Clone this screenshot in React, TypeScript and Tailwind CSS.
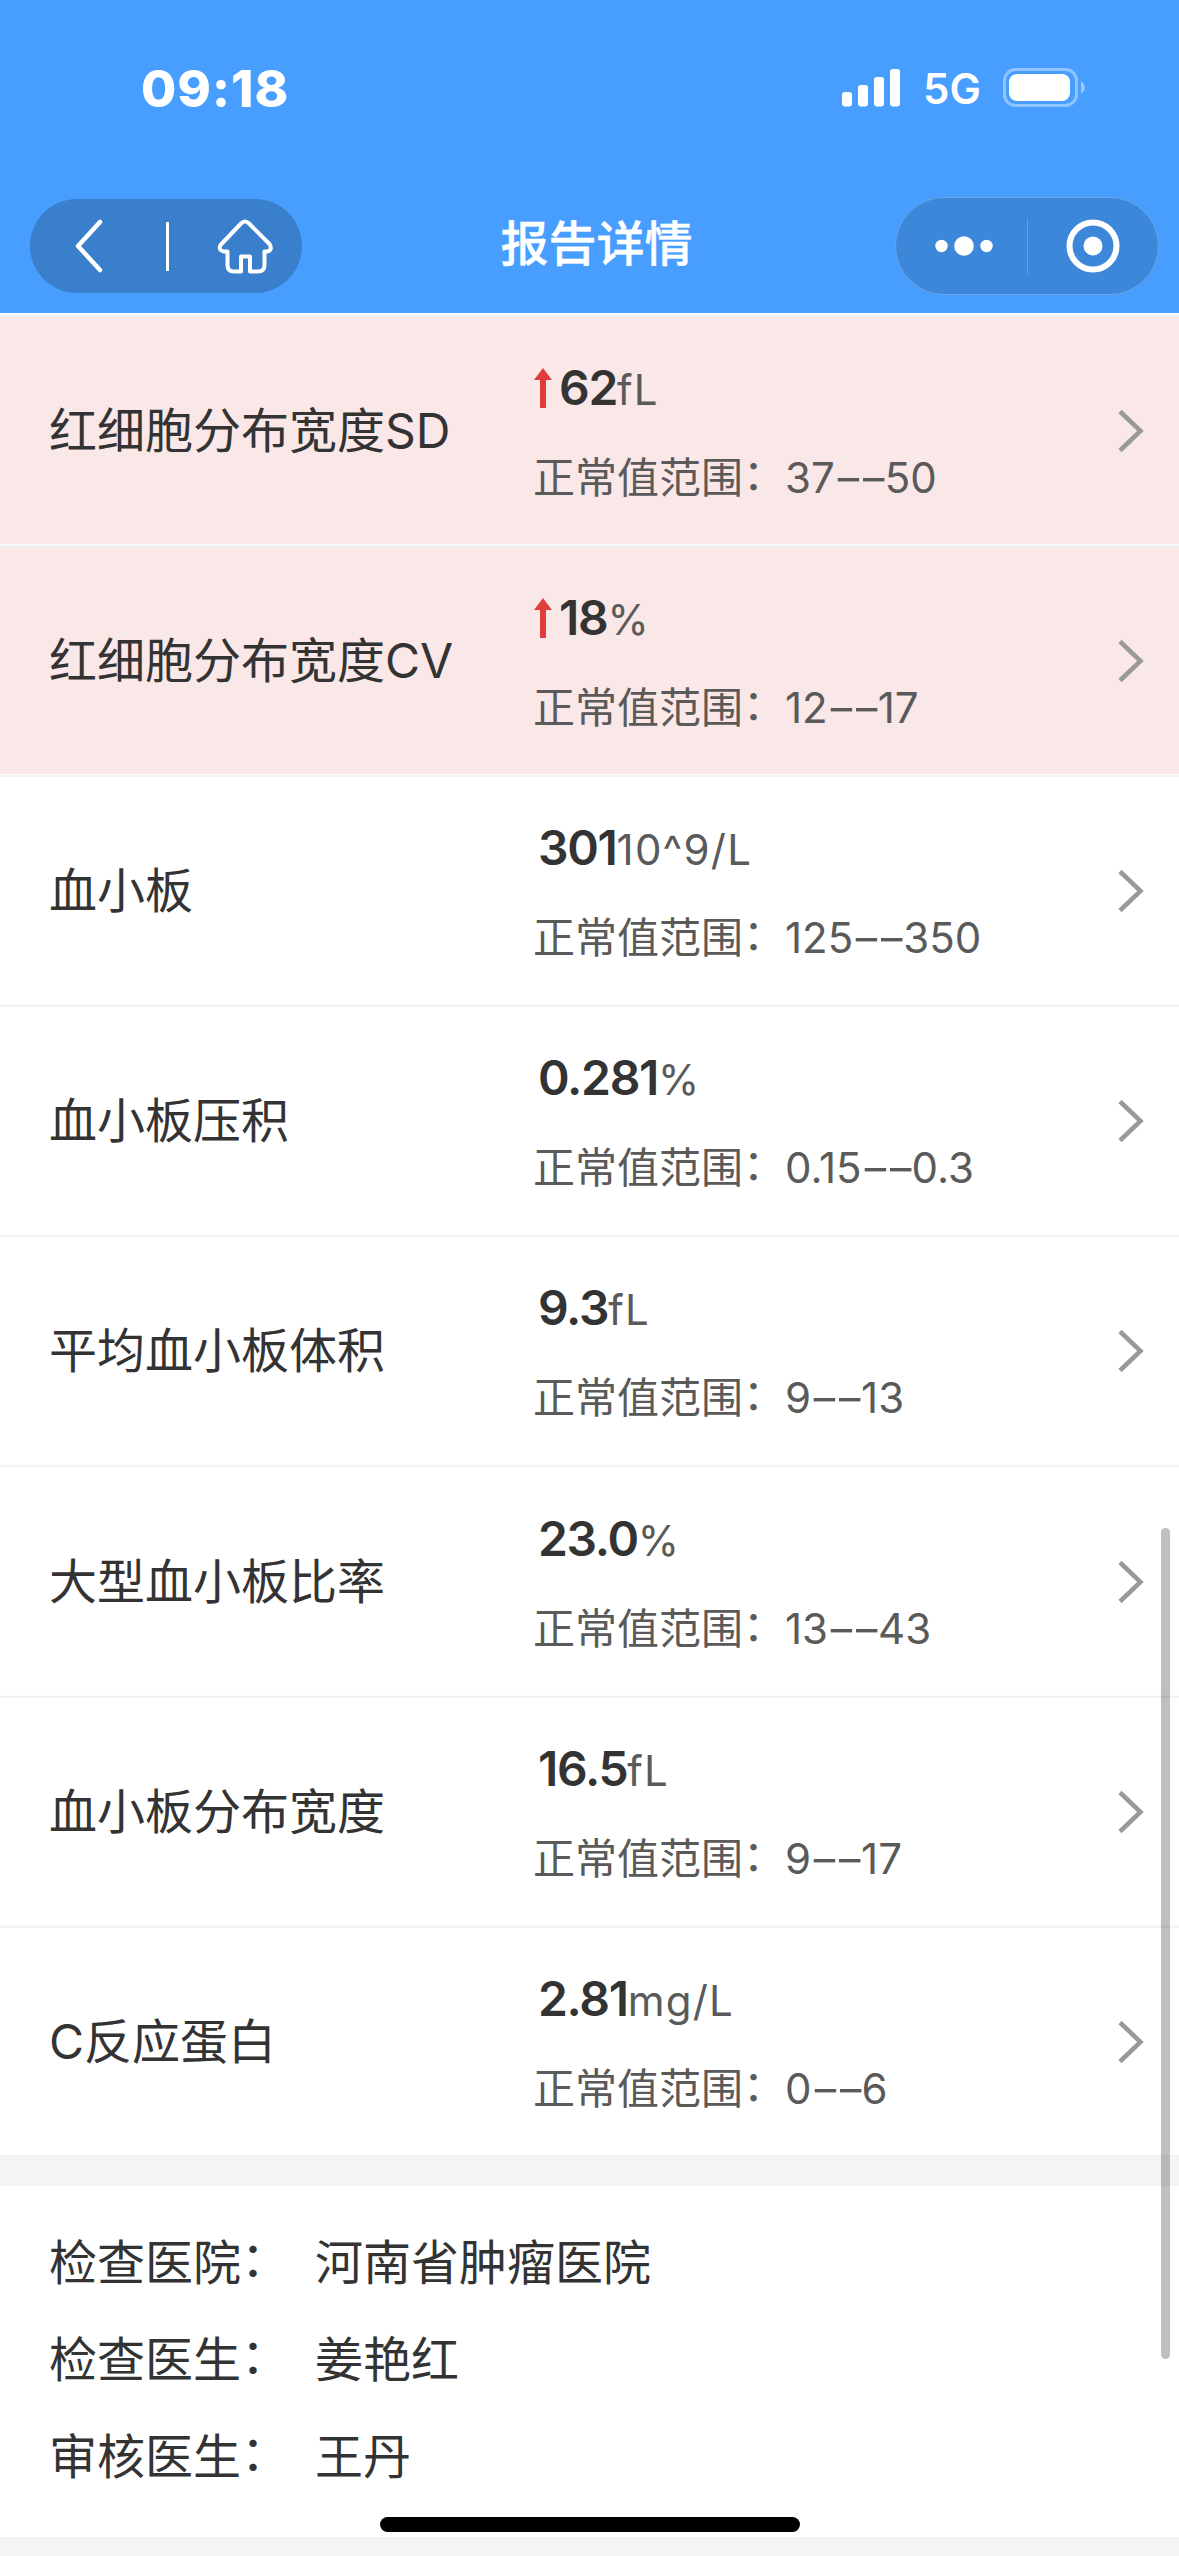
type Result = {
  name: string;
  value: string;
  unit: string;
  low: string;
  high: string;
  raised?: boolean;
};

const results: Result[] = [
  { name: '红细胞分布宽度SD', value: '62', unit: 'fL', low: '37', high: '50', raised: true },
  { name: '红细胞分布宽度CV', value: '18', unit: '%', low: '12', high: '17', raised: true },
  { name: '血小板', value: '301', unit: '10^9/L', low: '125', high: '350' },
  { name: '血小板压积', value: '0.281', unit: '%', low: '0.15', high: '0.3' },
  { name: '平均血小板体积', value: '9.3', unit: 'fL', low: '9', high: '13' },
  { name: '大型血小板比率', value: '23.0', unit: '%', low: '13', high: '43' },
  { name: '血小板分布宽度', value: '16.5', unit: 'fL', low: '9', high: '17' },
  { name: 'C反应蛋白', value: '2.81', unit: 'mg/L', low: '0', high: '6' },
];

const info = [
  { label: '检查医院', value: '河南省肿瘤医院' },
  { label: '检查医生', value: '姜艳红' },
  { label: '审核医生', value: '王丹' },
];

function StatusBar() {
  return (
    <div className="flex h-[176px] items-center pl-[141px] pr-[93px] text-white">
      <div className="text-[51px] font-extrabold leading-none tracking-[1px]">09:18</div>
      <svg className="ml-auto" width="58" height="38" viewBox="0 0 58 38" fill="#fff">
        <rect x="0" y="23" width="10" height="14.5" rx="3" />
        <rect x="16" y="16" width="10" height="21.5" rx="3" />
        <rect x="32" y="8" width="10" height="29.5" rx="3" />
        <rect x="48" y="0" width="10" height="37.5" rx="3" />
      </svg>
      <div className="ml-[23px] w-[57px] pt-[2px] text-[42px] font-semibold leading-none">5G</div>
      <svg className="ml-[23px]" width="83" height="40" viewBox="0 0 83 40" fill="none">
        <rect x="1.5" y="1.5" width="72" height="36" rx="11" stroke="#fff" strokeOpacity=".4" strokeWidth="3" />
        <rect x="6" y="6" width="61" height="27" rx="8" fill="#fff" />
        <path d="M78 13.500c5 2 5 10 0 12z" fill="#fff" fillOpacity=".45" />
      </svg>
    </div>
  );
}

function NavBar() {
  return (
    <div className="flex h-[137px] items-start justify-between pl-[30px] pr-[20px] pt-[21px]">
      <div className="mt-[2px] flex h-[94px] w-[272px] items-center rounded-full bg-[#3a7fcc]">
        <svg className="ml-[44px]" width="30" height="56" viewBox="0 0 30 56" fill="none" stroke="#fff" strokeWidth="4.500" strokeLinecap="round" strokeLinejoin="round">
          <path d="M26 4L4 28L26 52" />
        </svg>
        <div className="ml-[62px] h-[49px] w-[3px] bg-white" />
        <svg className="ml-[48px]" width="56" height="56" viewBox="0 0 56 56" fill="none" stroke="#fff" strokeWidth="4" strokeLinejoin="round">
          <path d="M24 5.500Q28 1.500 32 5.500L52.500 26Q56 32.500 50 33.500H47.500V47Q47.500 53.500 41 53.500H33V38.500H24V53.500H17Q10.500 53.500 10.500 47V33.500H7Q1 32.500 3.500 27z" />
        </svg>
      </div>
      <h1 className="mr-[4px] pt-[12px] text-[48px] font-medium leading-[70px] text-white [-webkit-text-stroke:0.400px_white]">报告详情</h1>
      <div className="flex h-[98px] w-[264px] items-center rounded-full border border-[#6ba3e3] bg-[#3c87da]">
        <svg className="ml-[39px]" width="58" height="20" viewBox="0 0 58 20" fill="#fff">
          <circle cx="6.500" cy="10" r="6.200" />
          <circle cx="29" cy="10" r="9.800" />
          <circle cx="51.500" cy="10" r="6.200" />
        </svg>
        <div className="ml-[34px] h-[57px] w-px bg-[#669fe1]" />
        <svg className="ml-[37px]" width="56" height="56" viewBox="0 0 56 56" fill="none">
          <circle cx="28" cy="28" r="23.500" stroke="#fff" strokeWidth="6" />
          <circle cx="28" cy="28" r="9.500" fill="#fff" />
        </svg>
      </div>
    </div>
  );
}

function Separator() {
  return (
    <div className="h-[3px] shrink-0 border-t border-[#fdfafa] bg-[#f1f2f4]" />
  );
}

function ResultRow({ item }: { item: Result }) {
  return (
    <div className="flex h-[230.100px] flex-col">
      <div className={`flex flex-1 items-center pl-[49px] pr-[34px] pt-px ${item.raised ? 'bg-[#fae7e7]' : 'bg-white'}`}>
        <div className="w-[484px] text-[48px] leading-[70px] text-[#333]">{item.name}</div>
        <div className="flex flex-1 flex-col gap-[22px] pt-[4px]">
          <div className="flex h-[68px] items-baseline leading-[68px]">
            {item.raised ? (
              <svg className="ml-px mr-[7px] self-center" width="18" height="40" viewBox="0 0 18 40" fill="#e03c3c">
                <path d="M9 0L18 12H12V40H6V12H0z" />
              </svg>
            ) : (
              <span className="w-[5px]" />
            )}
            <span className="text-[48px] font-semibold tracking-[-1.300px] text-[#333]">{item.value}</span>
            <span className="text-[42px] tracking-[1.200px] text-[#5a5a5a]">{item.unit}</span>
          </div>
          <div className="flex h-[68px] items-baseline text-[42px] leading-[68px] text-[#5a5a5a]">
            <span>
              正常值范围<span className="relative -top-[3px]">：</span>
            </span>
            <span>{item.low}</span>
            <span className="inline-block w-[50px]">
              <span className="-ml-[2px] inline-block origin-left scale-x-[1.600] tracking-[-3.500px]">--</span>
            </span>
            <span>{item.high}</span>
          </div>
        </div>
        <svg width="28" height="44" viewBox="0 0 28 44" fill="none" stroke="#999" strokeWidth="4.500">
          <path d="M3 2.500L23.500 22L3 41.500" />
        </svg>
      </div>
      <Separator />
    </div>
  );
}

export default function App() {
  return (
    <div className="relative flex h-[2556px] w-[1179px] flex-col overflow-hidden bg-[#f4f4f4] font-['Inter','Noto_Sans_CJK_SC',sans-serif]">
      <header className="h-[313px] shrink-0 bg-[#479eff]">
        <StatusBar />
        <NavBar />
      </header>
      <div className="h-[4px] shrink-0 border-y-2 border-t-white border-b-[#f1f2f4]" />
      <main className="h-[1838px] shrink-0 overflow-hidden">
        {results.map((item) => (
          <ResultRow key={item.name} item={item} />
        ))}
      </main>
      <section className="mt-[31px] flex h-[351px] shrink-0 flex-col bg-white pl-[49px] pt-[28px] text-[48px] text-[#333]">
        {info.map((row) => (
          <div key={row.label} className="flex h-[97px] items-center">
            <div className="w-[266px]">
              {row.label}
              <span className="relative -top-[4px]">：</span>
            </div>
            <div>{row.value}</div>
          </div>
        ))}
      </section>
      <div className="absolute left-[1161px] top-[1528px] h-[831px] w-[9px] rounded-full bg-black/25" />
      <div className="absolute left-[380px] top-[2517px] h-[15px] w-[420px] rounded-full bg-black" />
    </div>
  );
}
